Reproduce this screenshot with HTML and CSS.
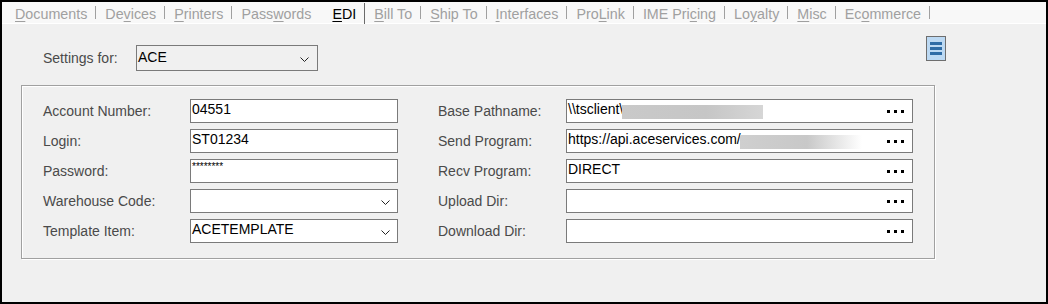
FILE: index.html
```html
<!DOCTYPE html>
<html lang="en">
<head>
  <meta charset="UTF-8" />
  <title>EDI Settings</title>
  <link rel="stylesheet" href="styles.css">
</head>
<body>
  <div class="window">
    <div class="tabs">
      <span class="tab"><u>D</u>ocuments</span>
      <span class="tab">De<u>v</u>ices</span>
      <span class="tab"><u>P</u>rinters</span>
      <span class="tab">Pass<u>w</u>ords</span>
      <span class="tab active"><u>E</u>DI</span>
      <span class="tab"><u>B</u>ill To</span>
      <span class="tab"><u>S</u>hip To</span>
      <span class="tab"><u>I</u>nterfaces</span>
      <span class="tab">Pro<u>L</u>ink</span>
      <span class="tab">IME Pri<u>c</u>ing</span>
      <span class="tab">Lo<u>y</u>alty</span>
      <span class="tab"><u>M</u>isc</span>
      <span class="tab">Ec<u>o</u>mmerce</span>
    </div>

    <div class="content">
      <div class="settings-row">
        <div class="settings-for">
          <span class="label">Settings for:</span>
          <div class="combo wide">
            <span class="value">ACE</span>
            <svg class="chev" width="9" height="5" viewBox="0 0 9 5"><polyline points="0.5,0.5 4.5,4.5 8.5,0.5" fill="none" stroke="#222" stroke-width="1"/></svg>
          </div>
        </div>
        <button class="menu-btn" aria-label="menu">
          <i></i><i></i><i></i>
        </button>
      </div>

      <div class="group">
        <span class="label">Account Number:</span>
        <div class="field"><span class="value">04551</span></div>
        <span class="label">Base Pathname:</span>
        <div class="field"><span class="value">\\tsclient\</span><span class="blur b1"></span><span class="dots"><i></i><i></i><i></i></span></div>

        <span class="label">Login:</span>
        <div class="field"><span class="value">ST01234</span></div>
        <span class="label">Send Program:</span>
        <div class="field"><span class="value">https://api.aceservices.com/</span><span class="blur b2"></span><span class="dots"><i></i><i></i><i></i></span></div>

        <span class="label">Password:</span>
        <div class="field"><span class="value pw">********</span></div>
        <span class="label">Recv Program:</span>
        <div class="field"><span class="value">DIRECT</span><span class="dots"><i></i><i></i><i></i></span></div>

        <span class="label">Warehouse Code:</span>
        <div class="field combo">
          <span class="value"></span>
          <svg class="chev" width="9" height="5" viewBox="0 0 9 5"><polyline points="0.5,0.5 4.5,4.5 8.5,0.5" fill="none" stroke="#222" stroke-width="1"/></svg>
        </div>
        <span class="label">Upload Dir:</span>
        <div class="field"><span class="value"></span><span class="dots"><i></i><i></i><i></i></span></div>

        <span class="label">Template Item:</span>
        <div class="field combo">
          <span class="value">ACETEMPLATE</span>
          <svg class="chev" width="9" height="5" viewBox="0 0 9 5"><polyline points="0.5,0.5 4.5,4.5 8.5,0.5" fill="none" stroke="#222" stroke-width="1"/></svg>
        </div>
        <span class="label">Download Dir:</span>
        <div class="field"><span class="value"></span><span class="dots"><i></i><i></i><i></i></span></div>
      </div>
    </div>
  </div>
</body>
</html>
```

FILE: styles.css
```css
* {
  box-sizing: border-box;
}

body {
  margin: 0;
  font-family: 'Liberation Sans', Arial, sans-serif;
  background: #000;
}

.window {
  width: 1048px;
  height: 304px;
  border: 2px solid #000;
  background: #f0f0f0;
  overflow: hidden;
}

/* tab strip */
.tabs {
  display: flex;
  align-items: flex-end;
  height: 22px;
  padding-left: 4px;
  background: #f8f8f8;
  border-bottom: 1px solid #fff;
  font-size: 14.3px;
  color: #a0a0a0;
}

.tab {
  position: relative;
  padding: 0 9px 1px 9px;
  line-height: 16px;
  white-space: nowrap;
}

.tab::after {
  content: "";
  position: absolute;
  right: 0;
  top: 0;
  height: 13px;
  border-right: 1px solid #a0a0a0;
}

.tab:nth-child(4)::after {
  display: none;
}

.tab.active {
  color: #000;
  padding-left: 12px;
}

.tab.active::after {
  top: -3px;
  height: 21px;
  border-right-color: #6a6a6a;
}

.tab u {
  text-decoration-thickness: 1px;
  text-underline-offset: 2px;
}

/* body */
.content {
  padding-left: 19px;
}

.settings-row {
  display: flex;
  justify-content: space-between;
  align-items: flex-start;
  width: 925px;
  padding-left: 22px;
  height: 61px;
}

.settings-for {
  display: flex;
  align-items: center;
  margin-top: 21px;
}

.settings-for .label {
  width: 93px;
}

.label {
  font-size: 14px;
  color: #4a4a4a;
  white-space: nowrap;
  line-height: 24px;
}

.field {
  position: relative;
  display: flex;
  align-items: flex-start;
  height: 24px;
  background: #fff;
  border: 1px solid #7a7a7a;
  padding: 1px 0 0 1px;
  font-size: 14px;
  color: #000;
}

.value {
  line-height: 16px;
  white-space: nowrap;
}

.value.pw {
  font-size: 10px;
  line-height: 12px;
}

.combo.wide {
  position: relative;
  display: flex;
  align-items: flex-start;
  width: 182px;
  height: 26px;
  background: #f0f0f0;
  border: 1px solid #7a7a7a;
  padding: 3px 0 0 1px;
  font-size: 14px;
}

.chev {
  position: absolute;
  right: 7px;
  top: 50%;
  margin-top: -1px;
}

.combo.wide .chev {
  right: 8px;
}

.menu-btn {
  margin-top: 12px;
  width: 20px;
  height: 25px;
  padding: 0;
  border: 1px solid #6e6e6e;
  background: #bcd9f3;
  display: flex;
  flex-direction: column;
  align-items: center;
  justify-content: center;
  gap: 2px;
}

.menu-btn i {
  display: block;
  width: 12px;
  height: 3px;
  background: #2e6ca6;
}

/* group box */
.group {
  display: grid;
  grid-template-columns: 147px 208px 168px 347px;
  grid-auto-rows: 24px;
  align-content: start;
  row-gap: 6px;
  width: 914px;
  height: 174px;
  padding: 13px 0 0 21px;
  border: 1px solid #a0a0a0;
  box-shadow: 1px 1px 0 #fff, inset 1px 1px 0 #fff;
}

.group > .label:nth-child(4n+3) {
  padding-left: 40px;
}

.blur {
  display: inline-block;
  height: 14px;
  margin-top: 4px;
}

.blur.b1 {
  width: 141px;
  margin-left: -1px;
  background: linear-gradient(90deg, #c9c9c9, #c6c6c6 60%, #d6d6d6);
}

.blur.b2 {
  width: 122px;
  margin-left: -1px;
  background: linear-gradient(90deg, #cfcfcf, #c8c8c8 55%, #ffffff);
}

.dots {
  position: absolute;
  right: 8px;
  top: 10px;
  display: flex;
  gap: 4px;
}

.dots i {
  display: block;
  width: 3px;
  height: 3px;
  background: #000;
}
```
